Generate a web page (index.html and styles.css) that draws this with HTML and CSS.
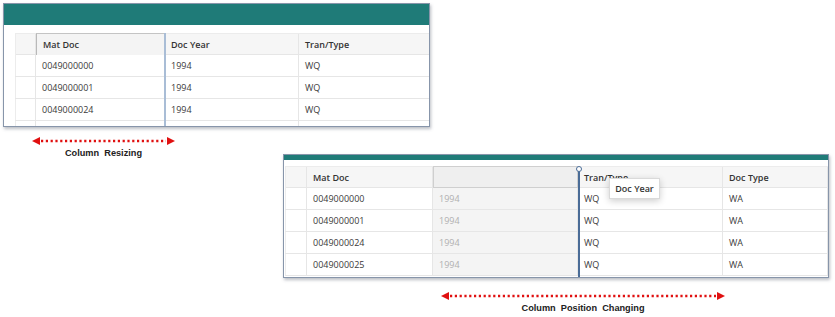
FILE: index.html
```html
<!DOCTYPE html>
<html>
<head>
<meta charset="utf-8">
<link rel="stylesheet" href="styles.css">
</head>
<body>
<div class="page">
  <div class="section1">
    <div class="panel panel1">
      <div class="bar bar1"></div>
      <div class="grid grid1">
        <div class="row head">
          <div class="c sel"></div><div class="c h selected">Mat Doc</div><div class="c h">Doc Year</div><div class="c h">Tran/Type</div>
        </div>
        <div class="row"><div class="c sel"></div><div class="c">0049000000</div><div class="c">1994</div><div class="c">WQ</div></div>
        <div class="row"><div class="c sel"></div><div class="c">0049000001</div><div class="c">1994</div><div class="c">WQ</div></div>
        <div class="row"><div class="c sel"></div><div class="c">0049000024</div><div class="c">1994</div><div class="c">WQ</div></div>
        <div class="row"><div class="c sel"></div><div class="c"></div><div class="c"></div><div class="c"></div></div>
      </div>
      <div class="resize-line"></div>
    </div>
    <div class="caption cap1">
      <svg class="arrow" width="143" height="10" viewBox="0 0 143 10">
        <polygon points="0,5 8,1 8,9" fill="#e01010"/>
        <line x1="9" y1="5" x2="134" y2="5" stroke="#e01010" stroke-width="2.4" stroke-dasharray="2.2 2.6"/>
        <polygon points="143,5 135,1 135,9" fill="#e01010"/>
      </svg>
      <div class="cap-text">Column&nbsp; Resizing</div>
    </div>
  </div>
  <div class="section2">
    <div class="panel panel2">
      <div class="bar bar2"></div>
      <div class="grid grid2">
        <div class="row head">
          <div class="c sel"></div><div class="c h">Mat Doc</div><div class="c h ghost"></div><div class="c h">Tran/Type</div><div class="c h">Doc Type</div>
        </div>
        <div class="row"><div class="c sel"></div><div class="c">0049000000</div><div class="c ghost">1994</div><div class="c">WQ</div><div class="c">WA</div></div>
        <div class="row"><div class="c sel"></div><div class="c">0049000001</div><div class="c ghost">1994</div><div class="c">WQ</div><div class="c">WA</div></div>
        <div class="row"><div class="c sel"></div><div class="c">0049000024</div><div class="c ghost">1994</div><div class="c">WQ</div><div class="c">WA</div></div>
        <div class="row"><div class="c sel"></div><div class="c">0049000025</div><div class="c ghost">1994</div><div class="c">WQ</div><div class="c">WA</div></div>
      </div>
      <div class="drop-line"><span class="knob"></span></div>
      <div class="tooltip">Doc Year</div>
    </div>
    <div class="caption cap2">
      <svg class="arrow" width="284" height="10" viewBox="0 0 284 10">
        <polygon points="0,5 8,1 8,9" fill="#e01010"/>
        <line x1="9" y1="5" x2="275" y2="5" stroke="#e01010" stroke-width="2.4" stroke-dasharray="2.2 2.6"/>
        <polygon points="284,5 276,1 276,9" fill="#e01010"/>
      </svg>
      <div class="cap-text">Column&nbsp; Position&nbsp; Changing</div>
    </div>
  </div>
</div>
</body>
</html>
```
FILE: styles.css
```css
html, body {
  margin: 0;
  padding: 0;
  background: #ffffff;
}
.page {
  width: 835px;
  height: 317px;
  overflow: hidden;
  font-family: "Open Sans", "Liberation Sans", sans-serif;
  color: #3a3a3a;
}
.section1 {
  display: flex;
  flex-direction: column;
  align-items: flex-start;
  padding: 3px 0 0 3px;
}
.panel {
  position: relative;
  box-sizing: border-box;
  border: 1px solid #8795aa;
  background: #ffffff;
  overflow: hidden;
  box-shadow: 1px 2px 3px rgba(60, 70, 90, 0.35);
}
.panel1 {
  width: 427px;
  height: 124px;
}
.bar {
  background: #1f7b78;
}
.bar1 {
  height: 21px;
}
.bar2 {
  height: 5px;
}
.grid1 {
  padding: 8px 0 0 11px;
}
.grid2 {
  padding: 6px 0 0 1px;
}
.row {
  display: grid;
  height: 22px;
  box-sizing: border-box;
  border-bottom: 1px solid #e6e6e6;
}
.grid1 .row {
  grid-template-columns: 21px 129px 134px 131px;
}
.grid2 .row {
  grid-template-columns: 22px 126px 145px 145px 105px;
}
.row.head {
  background: #f6f6f6;
}
.grid1 .row:first-child, .grid2 .row:first-child {
  border-top: 1px solid #ececec;
}
.c {
  box-sizing: border-box;
  border-right: 1px solid #e6e6e6;
  padding-left: 6px;
  font-size: 9px;
  line-height: 21px;
  white-space: nowrap;
  overflow: hidden;
}
.c.sel {
  border-left: 1px solid #ececec;
  padding: 0;
}
.c.h {
  font-weight: 600;
  color: #333333;
}
.c.selected {
  background: #f4f4f4;
  border-left: 1px solid #b9b9b9;
  border-top: 1px solid #c4c4c4;
  margin-top: -1px;
  height: 22px;
}
.c.ghost {
  background: #f4f4f4;
  color: #b0b0b0;
}
.c.h.ghost {
  background: #efefef;
  border: 1px solid #cfcfcf;
  margin-top: -1px;
  height: 22px;
}
.resize-line {
  position: absolute;
  left: 160px;
  top: 29px;
  bottom: 0;
  width: 2px;
  background: #a9bdd6;
}
.caption {
  display: flex;
  flex-direction: column;
  align-items: center;
}
.arrow {
  display: block;
}
.cap1 {
  margin: 9px 0 0 29px;
  width: 143px;
}
.cap-text {
  font-family: "Liberation Sans", Arial, sans-serif;
  font-weight: 700;
  font-size: 9.2px;
  line-height: 12px;
  color: #222222;
  margin-top: 1px;
}
.section2 {
  display: flex;
  flex-direction: column;
  align-items: flex-start;
  margin-top: -5px;
  padding-left: 283px;
}
.panel2 {
  width: 546px;
  height: 124px;
}
.drop-line {
  position: absolute;
  left: 294px;
  top: 14px;
  bottom: 0;
  width: 1.5px;
  background: #4a6c97;
}
.knob {
  position: absolute;
  left: -2.5px;
  top: -3px;
  width: 4px;
  height: 4px;
  border: 1.2px solid #4a6c97;
  border-radius: 50%;
  background: #ffffff;
}
.tooltip {
  position: absolute;
  left: 325px;
  top: 23px;
  width: 51px;
  height: 21px;
  box-sizing: border-box;
  background: #ffffff;
  border: 1px solid #dadada;
  box-shadow: 0 2px 7px rgba(0, 0, 0, 0.2);
  font-size: 9px;
  font-weight: 600;
  line-height: 19px;
  text-align: center;
  color: #333333;
}
.cap2 {
  margin: 13px 0 0 158px;
  width: 284px;
}
```
